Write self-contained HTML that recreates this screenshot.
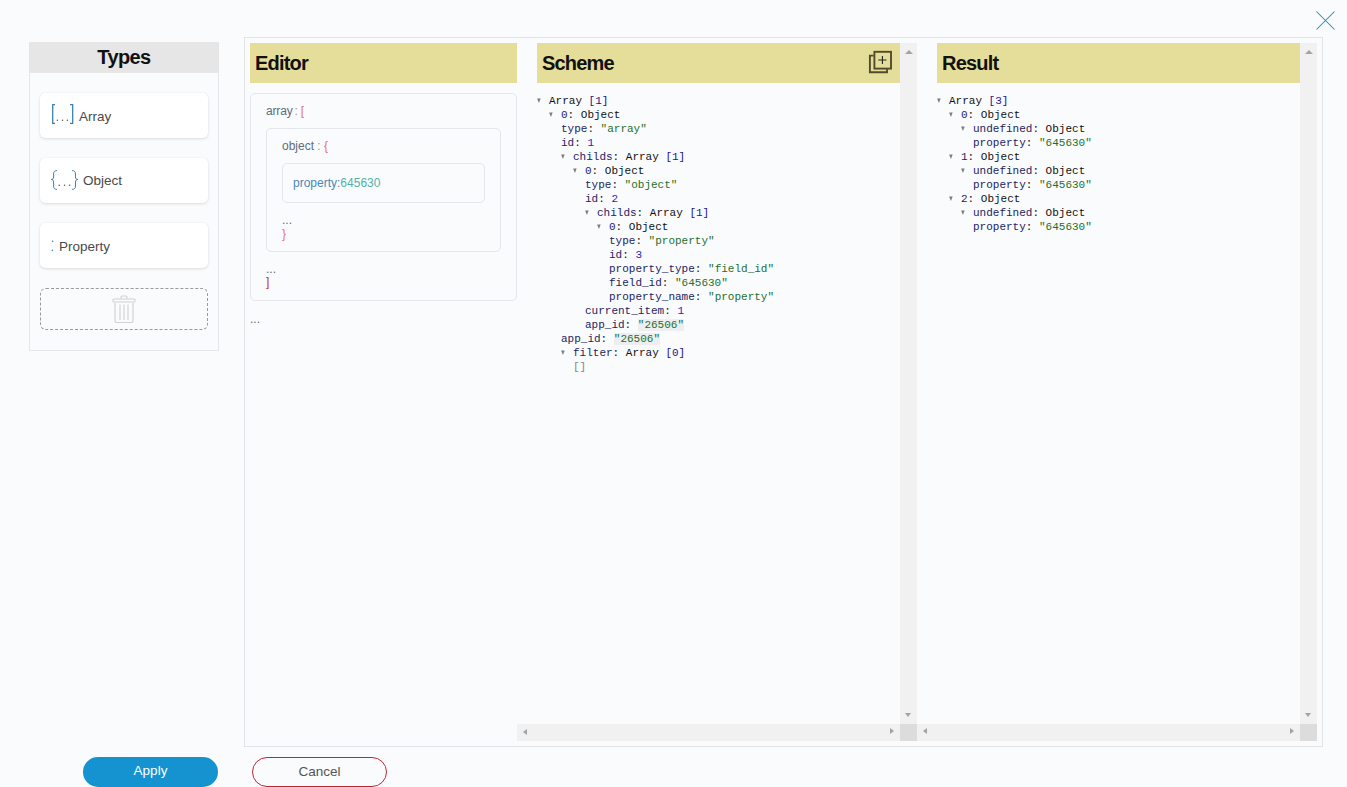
<!DOCTYPE html>
<html><head><meta charset="utf-8">
<style>
*{box-sizing:border-box;margin:0;padding:0}
html,body{width:1347px;height:787px;overflow:hidden;background:#fafbfd;font-family:"Liberation Sans",sans-serif;position:relative}
.abs{position:absolute}
/* close */
#close{left:1316px;top:11px;width:19px;height:19px}
/* types */
#types{left:29px;top:42px;width:190px;height:309px;border:1px solid #e4e6ea;border-top:none}
#types .hd{position:absolute;left:-1px;top:0;width:190px;height:31px;background:#e6e6e6;text-align:center;font-weight:bold;font-size:20px;line-height:31px;color:#111;letter-spacing:-0.6px}
.card{position:absolute;left:10px;width:168px;height:45px;background:#fff;border-radius:5px;box-shadow:0 1px 3px rgba(0,0,0,0.12),0 0 1px rgba(0,0,0,0.08);font-size:13px;color:#4a4a4a}
.card span.t{position:absolute;line-height:1;font-size:13.5px}
#trash{position:absolute;left:10px;top:246px;width:168px;height:42px;border:1px dashed #9a9a9a;border-radius:6px}
/* outer */
#outer{left:244px;top:37px;width:1079px;height:710px;border:1px solid #e2e4e8}
.yhd{position:absolute;height:40px;background:#e5de9a;font-weight:bold;font-size:20px;line-height:40px;color:#111;padding-left:6px;letter-spacing:-0.8px}
.ebox{position:absolute;border:1px solid #e3e6ea;border-radius:5px}
.ed{font-size:12px;color:#626c78;position:absolute;white-space:nowrap}
.red{color:#e57373}
/* scroll */
.vs{position:absolute;width:17px;background:#f1f1f1}
.hs{position:absolute;height:17px;background:#f1f1f1}
.corner{position:absolute;width:17px;height:17px;background:#dcdcdc}
.tri{position:absolute;width:0;height:0}
/* tree */
.tree{position:absolute;font-family:"Liberation Mono",monospace;font-size:11px;line-height:14px;white-space:pre;color:#111}
.row{position:absolute;height:14px}
.tg{position:absolute;top:4px;width:5px;height:6px}
.k{color:#23235f}
.s{color:#1f6f2c}
.n{color:#2a22c0}
.b{color:#1e1090}
.d{background:rgba(0,0,0,0.05)}
.em{color:#888}
/* buttons */
.btn{position:absolute;top:757px;width:135px;height:30px;border-radius:15px;font-size:13.5px;text-align:center;line-height:28px}
</style></head><body>

<svg class="abs" id="close" viewBox="0 0 19 19"><path d="M0.5 0.5L18.5 18.5M18.5 0.5L0.5 18.5" stroke="#1f8bbf" stroke-width="1.05" fill="none"/></svg>

<div class="abs" id="types">
  <div class="hd">Types</div>
  <div class="card" style="top:51px"><span class="t" style="left:39px;top:16.5px">Array</span></div>
  <div class="card" style="top:116px"><span class="t" style="left:43px;top:16px">Object</span></div>
  <div class="card" style="top:181px"><span class="t" style="left:19px;top:16.6px">Property</span></div>
  <div id="trash">
    <svg class="abs" style="left:71px;top:6px" width="24" height="28" viewBox="0 0 24 28"><path d="M9 3.5V2.2Q9 1 10.2 1H13.8Q15 1 15 2.2V3.5" stroke="#d2d2d2" stroke-width="1.2" fill="none"/><rect x="1" y="4" width="22" height="3" rx="1" fill="none" stroke="#d2d2d2" stroke-width="1.2"/><path d="M3 8V26Q3 27.5 4.5 27.5H19.5Q21 27.5 21 26V8" stroke="#d2d2d2" stroke-width="1.2" fill="none"/><path d="M8 9.5V25M12 9.5V25M16 9.5V25" stroke="#d2d2d2" stroke-width="1.1"/></svg>
  </div>
</div>

<svg class="abs" style="left:0;top:0" width="90" height="270" viewBox="0 0 90 270">
<path d="M55 104.6H52.7V123.4H55" stroke="#3d80b0" stroke-width="1.3" fill="none"/>
<path d="M70 104.6H72.7V123.4H70" stroke="#3d80b0" stroke-width="1.3" fill="none"/>
<circle cx="57.4" cy="120.3" r="0.75" fill="#555"/><circle cx="62.5" cy="120.3" r="0.75" fill="#555"/><circle cx="67.4" cy="120.3" r="0.75" fill="#555"/>
<path d="M57 170.6C54.5 170.6 53.6 171.8 53.6 174V177C53.6 178.6 52.8 179.5 51.2 179.5C52.8 179.5 53.6 180.4 53.6 182V186C53.6 188.2 54.5 189.4 57 189.4" stroke="#4182b0" stroke-width="1.0" fill="none"/>
<path d="M72.1 170.6C74.6 170.6 75.5 171.8 75.5 174V177C75.5 178.6 76.3 179.5 77.9 179.5C76.3 179.5 75.5 180.4 75.5 182V186C75.5 188.2 74.6 189.4 72.1 189.4" stroke="#4182b0" stroke-width="1.0" fill="none"/>
<circle cx="59.2" cy="185.2" r="0.75" fill="#555"/><circle cx="64.5" cy="185.2" r="0.75" fill="#555"/><circle cx="69.6" cy="185.2" r="0.75" fill="#555"/>
<circle cx="52.6" cy="241.2" r="0.8" fill="#3a7ab0"/><circle cx="52.3" cy="250.2" r="0.8" fill="#3a7ab0"/>
</svg>
<div class="abs" id="outer"></div>

<!-- Editor -->
<div class="yhd" style="left:250px;top:43px;width:267px;padding-left:5px">Editor</div>
<div class="ebox" style="left:250px;top:93px;width:267px;height:208px"></div>
<div class="ed" style="left:266px;top:104px;letter-spacing:-0.15px">array<span style="color:#999;margin-left:2px">:</span><span class="red" style="margin-left:3px">[</span></div>
<div class="ebox" style="left:266px;top:128px;width:235px;height:124px"></div>
<div class="ed" style="left:282px;top:139px">object <span style="color:#999">:</span> <span class="red">{</span></div>
<div class="ebox" style="left:282px;top:163px;width:203px;height:40px"></div>
<div class="ed" style="left:293px;top:176px;color:#4a86b8">property:<span style="color:#4fb3a9">645630</span></div>
<div class="ed" style="left:282px;top:213px">...</div>
<div class="ed red" style="left:282px;top:227px">}</div>
<div class="ed" style="left:266px;top:262px">...</div>
<div class="ed" style="left:266px;top:275px;color:#c0392b">]</div>
<div class="ed" style="left:250px;top:311.5px">...</div>

<!-- Scheme -->
<div class="yhd" style="left:537px;top:43px;width:363px;padding-left:5px">Scheme</div>
<svg class="abs" style="left:866px;top:48px" width="28" height="28" viewBox="866 48 28 28"><path d="M873.6 55.6H869.9V72.2H887V69.2" stroke="#524a2a" stroke-width="1.9" fill="none"/><rect x="874.4" y="51.8" width="16.6" height="16.8" stroke="#524a2a" stroke-width="1.9" fill="none"/><path d="M882.4 55.9V64.1M878.3 60H886.5" stroke="#222" stroke-width="1.1"/></svg>
<div class="vs" style="left:900px;top:43px;height:681px"></div>
<div class="hs" style="left:517px;top:724px;width:383px"></div>
<div class="corner" style="left:900px;top:724px"></div>

<!-- Result -->
<div class="yhd" style="left:937px;top:43px;width:363px;padding-left:5px">Result</div>
<div class="vs" style="left:1300px;top:43px;height:681px"></div>
<div class="hs" style="left:917px;top:724px;width:383px"></div>
<div class="corner" style="left:1300px;top:724px"></div>

<!-- scroll arrows -->
<div class="tri" style="left:905px;top:50px;border-left:4px solid transparent;border-right:4px solid transparent;border-bottom:4px solid #a3a3a3"></div>
<div class="tri" style="left:905px;top:713px;border-left:3.5px solid transparent;border-right:3.5px solid transparent;border-top:4px solid #a3a3a3"></div>
<div class="tri" style="left:1305px;top:50px;border-left:4px solid transparent;border-right:4px solid transparent;border-bottom:4px solid #a3a3a3"></div>
<div class="tri" style="left:1305px;top:713px;border-left:3.5px solid transparent;border-right:3.5px solid transparent;border-top:4px solid #a3a3a3"></div>
<div class="tri" style="left:523px;top:728.5px;border-top:3.6px solid transparent;border-bottom:3.6px solid transparent;border-right:4px solid #a3a3a3"></div>
<div class="tri" style="left:890px;top:728px;border-top:3.6px solid transparent;border-bottom:3.6px solid transparent;border-left:4px solid #a3a3a3"></div>
<div class="tri" style="left:923px;top:728px;border-top:3.6px solid transparent;border-bottom:3.6px solid transparent;border-right:4px solid #a3a3a3"></div>
<div class="tri" style="left:1290px;top:728px;border-top:3.6px solid transparent;border-bottom:3.6px solid transparent;border-left:4px solid #a3a3a3"></div>

<div id="scheme" class="tree" style="left:537px;top:94px"><div class="row" style="top:0px;left:0px"><svg class="tg" style="left:0" viewBox="0 0 5 6"><path d="M0.1 0.4H3.7L1.9 5Z" fill="#7d7d7d"/></svg><span style="position:absolute;left:12px">Array <span class="b">[1]</span></span></div><div class="row" style="top:14px;left:12px"><svg class="tg" style="left:0" viewBox="0 0 5 6"><path d="M0.1 0.4H3.7L1.9 5Z" fill="#7d7d7d"/></svg><span style="position:absolute;left:12px"><span class="k">0</span>: Object</span></div><div class="row" style="top:28px;left:24px"><span><span class="k">type</span>: <span class="s">"array"</span></span></div><div class="row" style="top:42px;left:24px"><span><span class="k">id</span>: <span class="n">1</span></span></div><div class="row" style="top:56px;left:24px"><svg class="tg" style="left:0" viewBox="0 0 5 6"><path d="M0.1 0.4H3.7L1.9 5Z" fill="#7d7d7d"/></svg><span style="position:absolute;left:12px"><span class="k">childs</span>: Array <span class="b">[1]</span></span></div><div class="row" style="top:70px;left:36px"><svg class="tg" style="left:0" viewBox="0 0 5 6"><path d="M0.1 0.4H3.7L1.9 5Z" fill="#7d7d7d"/></svg><span style="position:absolute;left:12px"><span class="k">0</span>: Object</span></div><div class="row" style="top:84px;left:48px"><span><span class="k">type</span>: <span class="s">"object"</span></span></div><div class="row" style="top:98px;left:48px"><span><span class="k">id</span>: <span class="n">2</span></span></div><div class="row" style="top:112px;left:48px"><svg class="tg" style="left:0" viewBox="0 0 5 6"><path d="M0.1 0.4H3.7L1.9 5Z" fill="#7d7d7d"/></svg><span style="position:absolute;left:12px"><span class="k">childs</span>: Array <span class="b">[1]</span></span></div><div class="row" style="top:126px;left:60px"><svg class="tg" style="left:0" viewBox="0 0 5 6"><path d="M0.1 0.4H3.7L1.9 5Z" fill="#7d7d7d"/></svg><span style="position:absolute;left:12px"><span class="k">0</span>: Object</span></div><div class="row" style="top:140px;left:72px"><span><span class="k">type</span>: <span class="s">"property"</span></span></div><div class="row" style="top:154px;left:72px"><span><span class="k">id</span>: <span class="n">3</span></span></div><div class="row" style="top:168px;left:72px"><span><span class="k">property_type</span>: <span class="s">"field_id"</span></span></div><div class="row" style="top:182px;left:72px"><span><span class="k">field_id</span>: <span class="s">"645630"</span></span></div><div class="row" style="top:196px;left:72px"><span><span class="k">property_name</span>: <span class="s">"property"</span></span></div><div class="row" style="top:210px;left:48px"><span><span class="k">current_item</span>: <span class="n">1</span></span></div><div class="row" style="top:224px;left:48px"><span><span class="k">app_id</span>: <span class="s d">"26506"</span></span></div><div class="row" style="top:238px;left:24px"><span><span class="k">app_id</span>: <span class="s d">"26506"</span></span></div><div class="row" style="top:252px;left:24px"><svg class="tg" style="left:0" viewBox="0 0 5 6"><path d="M0.1 0.4H3.7L1.9 5Z" fill="#7d7d7d"/></svg><span style="position:absolute;left:12px"><span class="k">filter</span>: Array <span class="b">[0]</span></span></div><div class="row" style="top:266px;left:36px"><span><span class="em">[]</span></span></div></div>
<div id="result" class="tree" style="left:937px;top:94px"><div class="row" style="top:0px;left:0px"><svg class="tg" style="left:0" viewBox="0 0 5 6"><path d="M0.1 0.4H3.7L1.9 5Z" fill="#7d7d7d"/></svg><span style="position:absolute;left:12px">Array <span class="b">[3]</span></span></div><div class="row" style="top:14px;left:12px"><svg class="tg" style="left:0" viewBox="0 0 5 6"><path d="M0.1 0.4H3.7L1.9 5Z" fill="#7d7d7d"/></svg><span style="position:absolute;left:12px"><span class="k">0</span>: Object</span></div><div class="row" style="top:28px;left:24px"><svg class="tg" style="left:0" viewBox="0 0 5 6"><path d="M0.1 0.4H3.7L1.9 5Z" fill="#7d7d7d"/></svg><span style="position:absolute;left:12px"><span class="k">undefined</span>: Object</span></div><div class="row" style="top:42px;left:36px"><span><span class="k">property</span>: <span class="s">"645630"</span></span></div><div class="row" style="top:56px;left:12px"><svg class="tg" style="left:0" viewBox="0 0 5 6"><path d="M0.1 0.4H3.7L1.9 5Z" fill="#7d7d7d"/></svg><span style="position:absolute;left:12px"><span class="k">1</span>: Object</span></div><div class="row" style="top:70px;left:24px"><svg class="tg" style="left:0" viewBox="0 0 5 6"><path d="M0.1 0.4H3.7L1.9 5Z" fill="#7d7d7d"/></svg><span style="position:absolute;left:12px"><span class="k">undefined</span>: Object</span></div><div class="row" style="top:84px;left:36px"><span><span class="k">property</span>: <span class="s">"645630"</span></span></div><div class="row" style="top:98px;left:12px"><svg class="tg" style="left:0" viewBox="0 0 5 6"><path d="M0.1 0.4H3.7L1.9 5Z" fill="#7d7d7d"/></svg><span style="position:absolute;left:12px"><span class="k">2</span>: Object</span></div><div class="row" style="top:112px;left:24px"><svg class="tg" style="left:0" viewBox="0 0 5 6"><path d="M0.1 0.4H3.7L1.9 5Z" fill="#7d7d7d"/></svg><span style="position:absolute;left:12px"><span class="k">undefined</span>: Object</span></div><div class="row" style="top:126px;left:36px"><span><span class="k">property</span>: <span class="s">"645630"</span></span></div></div>

<div class="btn" style="left:83px;background:#1592d0;color:#fff">Apply</div>
<div class="btn" style="left:252px;border:1px solid #b8282c;color:#555;line-height:27px">Cancel</div>

</body></html>
